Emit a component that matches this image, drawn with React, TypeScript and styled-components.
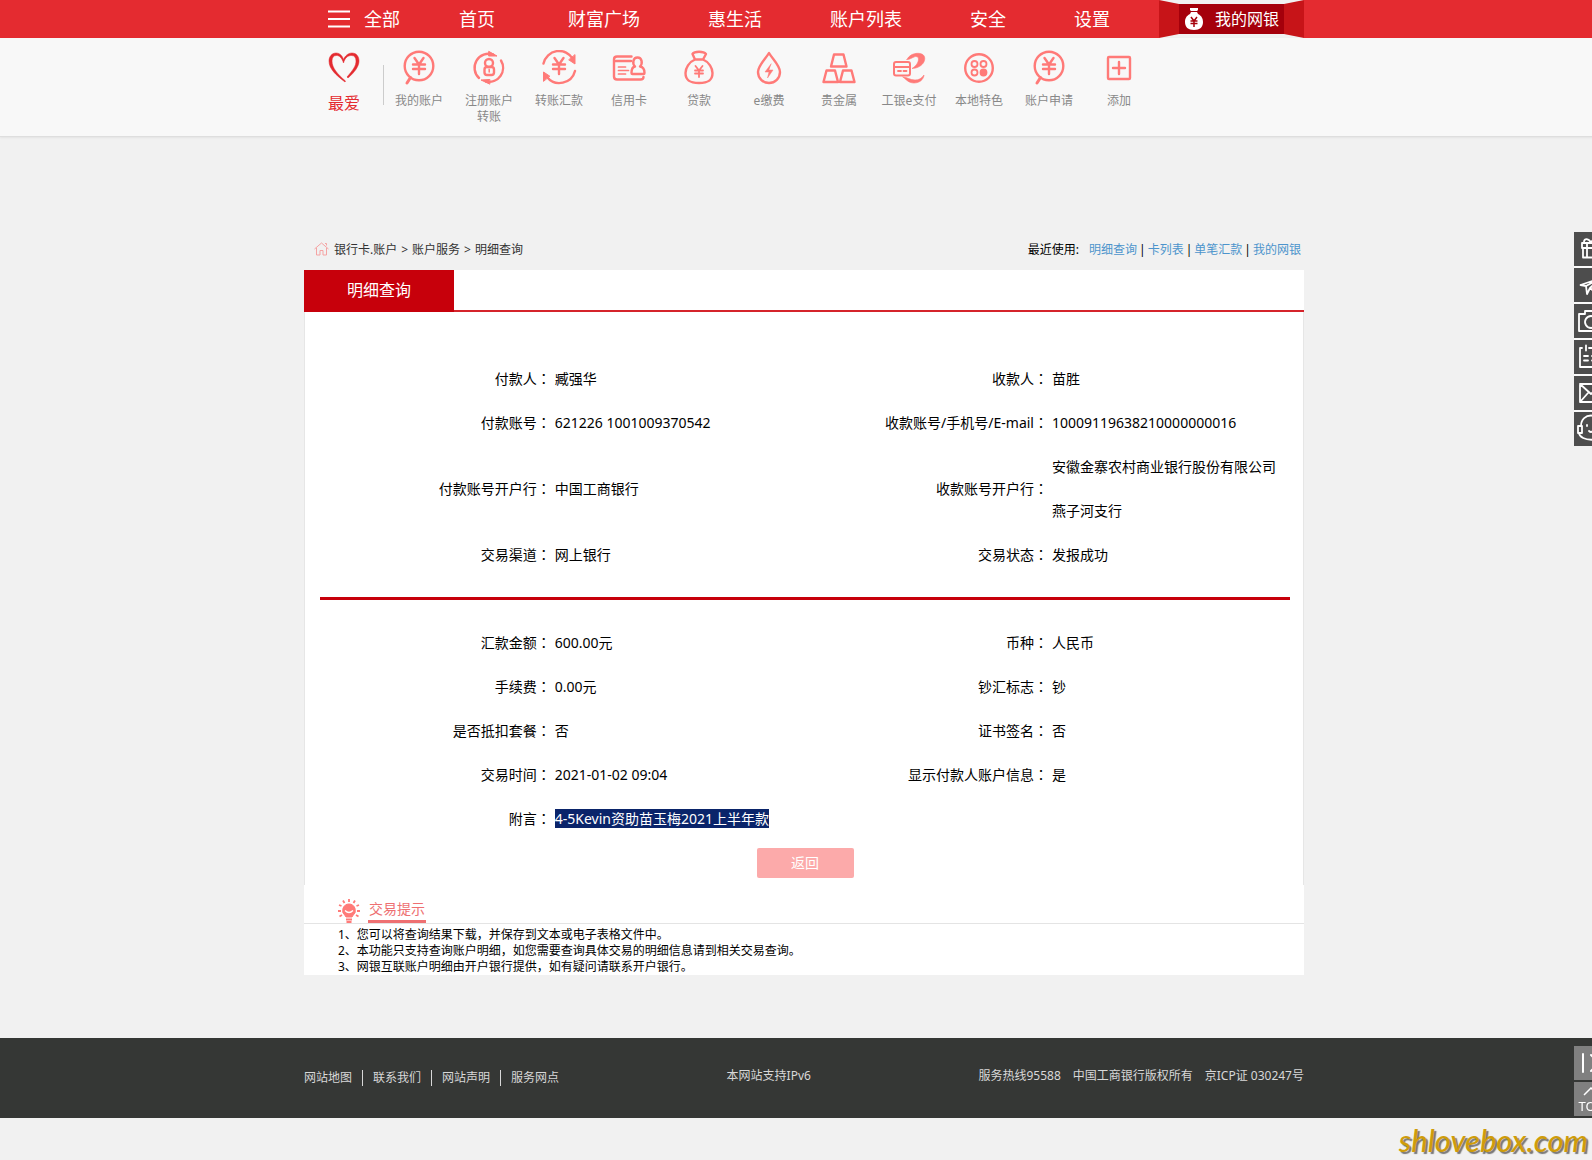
import React from "react";
import styled, { createGlobalStyle } from "styled-components";

const sans = `"Noto Sans", "Noto Sans CJK SC", sans-serif`;
const coral = "#ff7a78";

const GlobalStyle = createGlobalStyle`
  * { box-sizing: border-box; }
  body { margin: 0; background: #f1f1f1; color: #000; font: 12px/16px ${sans}; overflow-x: hidden; }
  a { color: inherit; text-decoration: none; }
  button { font: inherit; border: 0; padding: 0; background: none; color: inherit; cursor: pointer; }
  ul, ol { list-style: none; margin: 0; padding: 0; }
  svg { display: block; flex: none; }
`;

const Page = styled.div`
  width: calc(100% + 16px);
  min-height: 100vh;
  display: flex;
  flex-direction: column;
`;
const Container = styled.div`
  width: 100%;
  max-width: 1000px;
  margin: 0 auto;
`;

/* ---------- header ---------- */
const Header = styled.header`
  background: #e42b30;
  color: #fff;
  font-size: 18px;
  line-height: 38px;
`;
const HeaderRow = styled(Container)`
  display: flex;
  height: 38px;
  padding-left: 24px;
`;
const Lead = styled.div`
  display: flex;
  align-items: flex-start;
  gap: 59px;
  margin-right: 73px;
`;
const MenuButton = styled.button`
  display: flex;
  align-items: center;
  gap: 14px;
  height: 38px;
`;
const Nav = styled.nav`
  display: flex;
  gap: 68px;
`;
const Ribbon = styled.a`
  display: flex;
  align-items: center;
  justify-content: center;
  width: 145px;
  height: 38px;
  margin-left: auto;
  background: #f1f1f1;
  font-size: 16px;
`;
const RibbonSide = styled.span<{ $right?: boolean }>`
  width: 20px;
  height: 38px;
  background: #c71418;
  clip-path: ${(p) =>
    p.$right
      ? "polygon(0 4px, 100% 0, 100% 100%, 0 34px)"
      : "polygon(0 0, 100% 4px, 100% 34px, 0 100%)"};
`;
const RibbonFace = styled.span`
  flex: 1;
  height: 30px;
  display: flex;
  align-items: center;
  gap: 11px;
  padding-left: 5px;
  background: #a5000b;
`;

/* ---------- favourites bar ---------- */
const Favourites = styled.div`
  background: #f8f8f8;
  border-bottom: 1px solid #dedede;
  box-shadow: 0 1px 2px rgba(0, 0, 0, 0.06);
`;
const FavouritesRow = styled(Container)`
  display: flex;
  height: 98px;
  padding-left: 24px;
`;
const Favourite = styled.a`
  display: flex;
  flex-direction: column;
  align-items: center;
  gap: 9px;
  width: 32px;
  padding-top: 14px;
  color: #e42b30;
  font-size: 16px;
  line-height: 20px;
  white-space: nowrap;
`;
const Divider = styled.span`
  width: 1px;
  height: 40px;
  margin: 27px 0 0 23px;
  background: #ccc;
`;
const Shortcut = styled.a`
  display: flex;
  flex-direction: column;
  align-items: center;
  gap: 7px;
  width: 70px;
  padding-top: 12px;
  color: #888;
  text-align: center;
  span { width: 56px; }
`;

/* ---------- breadcrumb ---------- */
const TopLine = styled(Container)`
  display: flex;
  align-items: center;
  justify-content: space-between;
  height: 40px;
  margin-top: 93px;
  padding: 0 3px 0 10px;
`;
const Crumbs = styled.nav`
  display: flex;
  align-items: center;
  gap: 4px;
  color: #333;
`;
const Recent = styled.div`
  display: flex;
  gap: 2px;
  a { color: #4c94cc; }
  strong { font-weight: 400; margin-right: 8px; }
`;

/* ---------- panel ---------- */
const TabBar = styled.div`
  display: flex;
  height: 42px;
  background: #fff;
  border-bottom: 2px solid #d5242b;
`;
const Tab = styled.button`
  width: 150px;
  height: 42px;
  padding-bottom: 2px;
  background: #c7000b;
  color: #fff;
  font-size: 16px;
`;
const Panel = styled.section`
  padding: 45px 13px 0 15px;
  background: #fff;
  border: solid #e6e6e6;
  border-width: 0 1px;
`;
const Details = styled.table`
  width: 100%;
  table-layout: fixed;
  border-collapse: collapse;
  font-size: 14px;
  line-height: 44px;
  th, td { padding: 0 2px; font-weight: 400; }
  th { text-align: right; white-space: nowrap; }
  td { text-align: left; }
`;
const LabelCol = styled.col`
  width: 24%;
`;
const SecondLabelCol = styled.col`
  width: 26%;
`;
const ValueCol = styled.col`
  width: 240px;
`;
const Colon = styled.span`
  font-family: "Noto Sans CJK TC", sans-serif;
  line-height: 1;
`;
const Rule = styled.hr`
  height: 3px;
  margin: 20px 0 21px;
  border: 0;
  background: #c7000b;
`;
const Selected = styled.mark`
  background: #0a246a;
  color: #fff;
`;
const Actions = styled.div`
  display: flex;
  align-items: center;
  justify-content: center;
  height: 44px;
`;
const BackButton = styled.button`
  width: 97px;
  height: 30px;
  border-radius: 2px;
  background: #fcaaaa;
  color: #fff;
  font-size: 14px;
`;

/* ---------- tips ---------- */
const Tips = styled.section`
  background: #fff;
`;
const TipsHead = styled.div`
  display: flex;
  align-items: flex-end;
  gap: 8px;
  height: 39px;
  padding-left: 34px;
  border-bottom: 1px solid #e4e4e4;
`;
const TipsTitle = styled.h2`
  margin: 0;
  padding: 0 1px;
  border-bottom: 3px solid #ee7072;
  color: #ee7072;
  font-size: 14px;
  font-weight: 400;
  line-height: 22px;
`;
const TipsList = styled.ol`
  padding: 3px 34px 0;
`;

/* ---------- footer ---------- */
const Footer = styled.footer`
  margin-top: 63px;
  background: #353735;
  color: #d8d8d8;
`;
const FooterRow = styled(Container)`
  display: flex;
  justify-content: space-between;
  align-items: center;
  height: 80px;
`;
const FooterLinks = styled.nav`
  display: flex;
  a + a { margin-left: 10px; padding-left: 10px; border-left: 1px solid #d8d8d8; }
`;
const FooterNote = styled.div`
  display: flex;
  gap: 12px;
  padding-bottom: 4px;
  white-space: nowrap;
`;
const SiteMark = styled.div`
  padding-right: 20px;
  color: #cf9c0a;
  font: italic 500 31px/44px Lato, sans-serif;
  height: 42px;
  text-align: right;
  text-shadow: 2px 2px 1px #777;
`;

/* ---------- side rail ---------- */
const Rail = styled.aside<{ $bottom?: boolean }>`
  position: fixed;
  right: -16px;
  ${(p) => (p.$bottom ? "bottom: 44px;" : "top: 232px; background: #fafafa;")}
  display: grid;
  gap: 2px;
`;
const RailButton = styled.button<{ $light?: boolean }>`
  width: 34px;
  height: 34px;
  background: ${(p) => (p.$light ? "#808080" : "#4d4d4d")};
  color: #fff;
`;
const TopButton = styled(RailButton)`
  display: flex;
  flex-direction: column;
  align-items: center;
  font-size: 13px;
  line-height: 14px;
  padding-top: 5px;
  gap: 3px;
`;

/* ---------- icons ---------- */
const Icon = ({ children, size = 36, width = 2.4 }: { children: React.ReactNode; size?: number; width?: number }) => (
  <svg width={size} height={size} viewBox={`0 0 ${size} ${size}`} fill="none" stroke="currentColor" strokeWidth={width} strokeLinecap="round" strokeLinejoin="round" aria-hidden="true">
    {children}
  </svg>
);
const yen = "M13.5 8l4.5 6.5 4.5-6.5M12 14.5h12M12 19h12M18 14.5v9.5";

const icons: Record<string, React.ReactNode> = {
  search: (
    <>
      <circle cx="18" cy="16" r="14.3" />
      <path d="M9.500 27.500L6 33" strokeWidth="3" />
      <path d={yen} />
    </>
  ),
  register: (
    <>
      <path d="M8 28A14 14 0 0 1 22 4.500M30 10.500A14 14 0 0 1 15 31.500" />
      <path d="M18 1.500L26 6l-8 0zM18.500 34L10 30l8.500-.5z" fill="currentColor" strokeWidth="1" />
      <circle cx="18" cy="13" r="4" />
      <rect x="13.500" y="17" width="9.500" height="8" rx="2.500" />
      <path d="M18.200 19.500v2.500" strokeWidth="1.500" />
    </>
  ),
  transfer: (
    <>
      <path d="M2.500 13.500A16 16 0 0 1 32 9M34 21A16 16 0 0 1 6 27" />
      <path d="M34 5v9l-6-4zM2.500 31v-9l6 4z" fill="currentColor" strokeWidth="1" />
      <path d={yen} />
    </>
  ),
  card: (
    <>
      <path d="M20.500 6.500H6q-3 0-3 3v17q0 3 3 3H29.500q3 0 3-2.500M5 11h15" />
      <path d="M7.500 17h7M7.500 20.500h10M7.500 24h7" strokeWidth="1.700" />
      <path d="M24 16.500c-3-3-2-9 2.500-9s5.500 6 2.500 9c3 .5 4.500 3 4.500 6.500q0 1-1 1H21.500q-1 0-1-1c0-3.500 1-6 3.500-6.500z" />
    </>
  ),
  loan: (
    <>
      <path d="M14 9.500L11.500 4c2-3 11-3 13.500 0l-3 5.500zM14 9.500C8 12 4.500 18 4.500 23c0 7 4 10 13.500 10s13.500-3 13.500-10c0-5-3.500-11-9.500-13.500" />
      <path d="M14.500 16l3.500 4.500 3.500-4.500M14 20.500h8M14 23.500h8M18 20.500v6.500" strokeWidth="1.800" />
    </>
  ),
  utility: (
    <>
      <path d="M18 3C14.500 9 7 15.500 7 22a11 11 0 0 0 22 0C29 15.500 21.500 9 18 3z" />
      <path d="M20 14l-6 8h4l-1.500 6 5.500-8h-4z" fill="currentColor" strokeWidth="0.500" />
    </>
  ),
  metal: (
    <path d="M13 4.500h9.500l3 12H10zM5.500 20.500H14l3 11.500H2.500zM22 20.500h8.500l3 11.500H19z" />
  ),
  epay: (
    <>
      <path d="M16 9.500C18 5.500 22 3.300 27 3.300c6 0 8 4 6 8.500-2 4-7 6.700-12 6.700 4-2.500 6.500-6 6.500-9.500 0-2.500-2.500-3-4.500-2-2 .8-4 2.500-7 2.500zM12 27c4 0 7 3 12 3 4 0 6.500-1.500 9-5-.5 5-5 8-10 8-5 0-7.500-3-11-6z" fill="currentColor" strokeWidth="0.600" />
      <rect x="3" y="12" width="16" height="13.500" rx="2" fill="#f8f8f8" strokeWidth="2" />
      <path d="M4 17h15M7 21h3M12.500 21h3" strokeWidth="1.800" />
    </>
  ),
  local: (
    <>
      <circle cx="18" cy="18" r="13.800" />
      <g strokeWidth="1.800">
        <circle cx="13.500" cy="14" r="3" />
        <circle cx="22.500" cy="14" r="3" />
        <circle cx="13.500" cy="22.500" r="3" />
        <circle cx="22.500" cy="22.500" r="3" fill="currentColor" />
      </g>
    </>
  ),
  add: (
    <>
      <rect x="7" y="7" width="22" height="22" rx="1" />
      <path d="M18 12v12M12 18h12" />
    </>
  ),
};

const shortcuts: [string, string][] = [
  ["search", "我的账户"],
  ["register", "注册账户转账"],
  ["transfer", "转账汇款"],
  ["card", "信用卡"],
  ["loan", "贷款"],
  ["utility", "e缴费"],
  ["metal", "贵金属"],
  ["epay", "工银e支付"],
  ["local", "本地特色"],
  ["search", "账户申请"],
  ["add", "添加"],
];

const railIcons: [string, React.ReactNode][] = [
  ["礼品", <path key="g" d="M9 16v9.500h16V16M8 11h18v5H8zM13 11v14M10 10C10 6 15 6 17 11c2-5 7-5 7-1" />],
  ["消息", <path key="p" d="M6.500 17L27 10l-4 16-7-6-3 6-1-8zM12 18l15-8-11 10" />],
  ["截图", <path key="c" d="M5 10h6V7h12v3h6v17H5zM17 12a6 6 0 1 0 .1 0z" />],
  ["日历", <path key="d" d="M8 8H6v19h22V8h-3M12 5.500v5M22 5.500v5M15 8h5M10 16h4M10 20.500h4M18 16h6M18 20.500h6" />],
  ["邮件", <path key="m" d="M6 8h22v18H6zM6 8l11 10L28 8M6 26l8-9M28 26l-8-9" />],
  ["客服", <path key="f" d="M7 14C7 0 27 0 27 14M4 14h4v7H4zM26 14h4v7h-4zM5 21c1 9 24 9 24 0M13 13v1M21 13v1M15 19q2 2 4 0" />],
];

type Pair = [string, string, string?, string?];
const parties: Pair[] = [
  ["付款人", "臧强华", "收款人", "苗胜"],
  ["付款账号", "621226 1001009370542", "收款账号/手机号/E-mail", "10009119638210000000016"],
  ["付款账号开户行", "中国工商银行", "收款账号开户行", "安徽金寨农村商业银行股份有限公司燕子河支行"],
  ["交易渠道", "网上银行", "交易状态", "发报成功"],
];
const payment: Pair[] = [
  ["汇款金额", "600.00元", "币种", "人民币"],
  ["手续费", "0.00元", "钞汇标志", "钞"],
  ["是否抵扣套餐", "否", "证书签名", "否"],
  ["交易时间", "2021-01-02 09:04", "显示付款人账户信息", "是"],
  ["附言", "4-5Kevin资助苗玉梅2021上半年款"],
];

const DetailTable = ({ rows, selected }: { rows: Pair[]; selected?: string }) => (
  <Details>
    <colgroup>
      <LabelCol />
      <col />
      <SecondLabelCol />
      <ValueCol />
    </colgroup>
    <tbody>
      {rows.map(([label, value, label2, value2]) => (
        <tr key={label}>
          <th scope="row">{label}<Colon>：</Colon></th>
          <td>{label === selected ? <Selected>{value}</Selected> : value}</td>
          {label2 && <th scope="row">{label2}<Colon>：</Colon></th>}
          {label2 && <td>{value2}</td>}
        </tr>
      ))}
    </tbody>
  </Details>
);

export default function App() {
  return (
    <Page>
      <GlobalStyle />
      <Header>
        <HeaderRow>
          <Lead>
            <MenuButton>
              <svg width="22" height="18" viewBox="0 0 22 18" stroke="#fff" strokeWidth="2" aria-hidden="true">
                <path d="M0 1.500h22M0 9h22M0 16.500h22" />
              </svg>
              全部
            </MenuButton>
            <a href="#home">首页</a>
          </Lead>
          <Nav>
            {["财富广场", "惠生活", "账户列表", "安全", "设置"].map((t) => (
              <a key={t} href="#nav">{t}</a>
            ))}
          </Nav>
          <Ribbon href="#mybank">
            <RibbonSide />
            <RibbonFace>
              <svg width="20" height="22" viewBox="0 0 20 22" aria-hidden="true">
                <path d="M6 0h8v2l-1 1H7L6 2zM7 4h6l1 2c4 2 5 5 5 8 0 5-3 8-9 8s-9-3-9-8c0-3 1-6 5-8z" fill="#fff" />
                <path d="M7 9l3 4 3-4M6.500 13h7M6.500 15.500h7M10 13v6" stroke="#a5000b" strokeWidth="1.500" fill="none" />
              </svg>
              我的网银
            </RibbonFace>
            <RibbonSide $right />
          </Ribbon>
        </HeaderRow>
      </Header>

      <Favourites>
        <FavouritesRow>
          <Favourite href="#favourite">
            <svg width="32" height="32" viewBox="0 0 32 32" fill="currentColor" stroke="currentColor" strokeWidth="0.500" aria-hidden="true">
              <path d="M17 30C8 23 1 17 1 9c0-4.500 3-8 7-8 4 0 6.500 3 7.500 6.500C17 4 20 1 24 1c4.500 0 7 3.500 7 8 0 5-4 11-11 17l-1-1c6-7 9-11 9-16 0-3.500-1.500-5.500-4.500-5.500-4 0-6.500 2.500-8 7.500-1.500-5-4-7.500-7-7.500S4 5.500 4 9c0 7 5.500 13 13.500 20z" />
            </svg>
            最爱
          </Favourite>
          <Divider />
          {shortcuts.map(([icon, text]) => (
            <Shortcut key={text} href="#shortcut">
              <svg width="36" height="36" viewBox="0 0 36 36" fill="none" color={coral} stroke="currentColor" strokeWidth="2.400" strokeLinecap="round" strokeLinejoin="round" aria-hidden="true">
                {icons[icon]}
              </svg>
              <span>{text}</span>
            </Shortcut>
          ))}
        </FavouritesRow>
      </Favourites>

      <TopLine>
        <Crumbs aria-label="当前位置">
          <svg width="16" height="16" viewBox="0 0 16 16" fill="none" stroke="#f5a3a3" aria-hidden="true">
            <path d="M.5 7l7-6 7 6M2.500 6v7h3.500V8.500h3V13h3.500V6M11 1.500h1.500v2" />
          </svg>
          <a href="#cards">银行卡.账户</a>
          <span>&gt;</span>
          <a href="#service">账户服务</a>
          <span>&gt;</span>
          <span>明细查询</span>
        </Crumbs>
        <Recent>
          <strong>最近使用:</strong>
          {["明细查询", "卡列表", "单笔汇款", "我的网银"].map((t, i) => (
            <React.Fragment key={t}>
              {i > 0 && <span>|</span>}
              <a href="#recent">{t}</a>
            </React.Fragment>
          ))}
        </Recent>
      </TopLine>

      <Container as="main">
        <TabBar>
          <Tab>明细查询</Tab>
        </TabBar>
        <Panel>
          <DetailTable rows={parties} />
          <Rule />
          <DetailTable rows={payment} selected="附言" />
          <Actions>
            <BackButton>返回</BackButton>
          </Actions>
        </Panel>
        <Tips>
          <TipsHead>
            <svg width="22" height="24" viewBox="0 0 22 24" fill={coral} stroke={coral} aria-hidden="true">
              <path d="M11 5a6.500 6.500 0 0 1 4 11.500l-1 1.500H8l-1-1.500A6.500 6.500 0 0 1 11 5z" />
              <path d="M11 0v3M5 1.500l1.500 2.500M17 1.500L15.500 4M1 6l2.500 1M21 6l-2.500 1M0 12h3M22 12h-3M1.500 17.500L4 16M20.500 17.500L18 16M8 20.500h6M8.500 23h5" strokeWidth="1.800" />
              <path d="M7 11.500q4 4 8 0" fill="none" stroke="#fff" strokeWidth="1.300" />
            </svg>
            <TipsTitle>交易提示</TipsTitle>
          </TipsHead>
          <TipsList>
            <li>1、您可以将查询结果下载，并保存到文本或电子表格文件中。</li>
            <li>2、本功能只支持查询账户明细，如您需要查询具体交易的明细信息请到相关交易查询。</li>
            <li>3、网银互联账户明细由开户银行提供，如有疑问请联系开户银行。</li>
          </TipsList>
        </Tips>
      </Container>

      <Footer>
        <FooterRow>
          <FooterLinks>
            {["网站地图", "联系我们", "网站声明", "服务网点"].map((t) => (
              <a key={t} href="#footer">{t}</a>
            ))}
          </FooterLinks>
          <FooterNote>本网站支持IPv6</FooterNote>
          <FooterNote>
            <span>服务热线95588</span>
            <span>中国工商银行版权所有</span>
            <span>京ICP证 030247号</span>
          </FooterNote>
        </FooterRow>
      </Footer>
      <SiteMark>shlovebox.com</SiteMark>

      <Rail>
        {railIcons.map(([name, shape]) => (
          <RailButton key={name} aria-label={name}>
            <Icon size={34} width={1.8}>{shape}</Icon>
          </RailButton>
        ))}
      </Rail>
      <Rail $bottom>
        <RailButton $light aria-label="收起">
          <Icon size={34} width={2}><path d="M9 8v18M17 9l8 8-8 8" /></Icon>
        </RailButton>
        <TopButton $light>
          <svg width="16" height="9" viewBox="0 0 16 9" fill="none" stroke="#fff" strokeWidth="1.500" aria-hidden="true">
            <path d="M1 8l7-7 7 7" />
          </svg>
          TOP
        </TopButton>
      </Rail>
    </Page>
  );
}
